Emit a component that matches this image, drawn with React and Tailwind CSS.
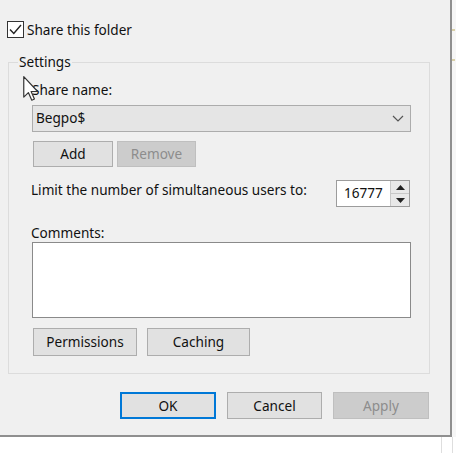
import React from "react";

const font = "font-['Noto_Sans',Arial,sans-serif]";

function Btn({ children, className = "", disabled = false }) {
  return (
    <div
      className={
        "flex items-center justify-center border text-[13.6px] leading-none " +
        (disabled
          ? "bg-[#cccccc] border-[#bfbfbf] text-[#8d8d8d] "
          : "bg-[#e1e1e1] border-[#adadad] text-[#111] ") +
        className
      }
    >
      {children}
    </div>
  );
}

export default function App() {
  return (
    <div className={"w-[456px] h-[453px] bg-white overflow-hidden relative " + font}>
      <div className="flex">
        {/* dialog */}
        <div className="w-[452px] h-[437px] bg-[#f0f0f0] border-r-2 border-b-2 border-[#8f8f8f] flex flex-col">
          {/* checkbox row */}
          <div className="flex items-center pt-[21px] pl-[7px] h-[38px]">
            <div className="w-[17px] h-[17px] border border-[#333] bg-white flex items-center justify-center">
              <svg width="13" height="11" viewBox="0 0 13 11">
                <path d="M1 5.5 L4.8 9.5 L12 1" fill="none" stroke="#222" strokeWidth="1.4" />
              </svg>
            </div>
            <span className="ml-[3px] text-[13.6px] leading-[18px] text-[#111]">Share this folder</span>
          </div>

          {/* settings group */}
          <fieldset className="ml-[8px] mr-[20px] mt-[15px] border border-[#dcdcdc] pl-[23px] pr-[18px] pb-[17px]">
            <legend className="-ml-[14px] px-[1px] text-[13.6px] leading-[18px] text-[#111]">Settings</legend>
            <div className="mt-[10px] text-[13.6px] leading-[18px] text-[#111]">Share name:</div>
            <div className="mt-[6px] h-[27px] bg-[#e5e5e5] border border-[#acacac] flex items-center justify-between pl-[3px] pr-[6px]">
              <span className="text-[13.6px] text-[#111]">Begpo$</span>
              <svg width="12" height="7" viewBox="0 0 12 7">
                <path d="M1 1 L6 6 L11 1" fill="none" stroke="#555" strokeWidth="1.2" />
              </svg>
            </div>
            <div className="mt-[9px] flex gap-[4px] ml-[1px]">
              <Btn className="w-[80px] h-[26px]">Add</Btn>
              <Btn className="w-[79px] h-[26px]" disabled>Remove</Btn>
            </div>
            <div className="mt-[13px] flex items-center justify-between h-[27px]">
              <span className="text-[13.6px] leading-[18px] text-[#111] -mt-[7px] -ml-[1px]">
                Limit the number of simultaneous users to:
              </span>
              <div className="flex h-[27px] w-[74px] border border-[#9c9c9c] bg-white mr-[1px]">
                <div className="flex-1 flex items-center pl-[7px] text-[13.6px] text-[#111]">16777</div>
                <div className="w-[19px] flex flex-col bg-[#e8e8e8] border-l border-[#c8c8c8]">
                  <div className="flex-1 flex items-center justify-center border-b border-[#c8c8c8]">
                    <svg width="9" height="5" viewBox="0 0 9 5"><path d="M0 5 L4.5 0 L9 5 Z" fill="#222" /></svg>
                  </div>
                  <div className="flex-1 flex items-center justify-center">
                    <svg width="9" height="5" viewBox="0 0 9 5"><path d="M0 0 L4.5 5 L9 0 Z" fill="#222" /></svg>
                  </div>
                </div>
              </div>
            </div>
            <div className="mt-[17px] text-[13.6px] leading-[18px] text-[#111] -ml-[1px]">Comments:</div>
            <div className="h-[76px] bg-white border border-[#8a8a8a]" />
            <div className="mt-[10px] flex gap-[10px] ml-[1px]">
              <Btn className="w-[104px] h-[28px]">Permissions</Btn>
              <Btn className="w-[103px] h-[28px]">Caching</Btn>
            </div>
          </fieldset>

          {/* bottom buttons */}
          <div className="mt-[18px] flex justify-end gap-[11px] pr-[21px]">
            <Btn className="w-[96px] h-[27px] !border-2 !border-[#0078d7]">OK</Btn>
            <Btn className="w-[95px] h-[27px]">Cancel</Btn>
            <Btn className="w-[96px] h-[27px]" disabled>Apply</Btn>
          </div>
        </div>
        {/* right strip */}
        <div className="w-[4px] h-[437px] bg-[#f6f6f6] flex flex-col">
          <div className="mt-[29px] h-[2px] w-[3px] bg-[#d8cfa8]" />
          <div className="mt-[28px] h-[2px] w-[3px] bg-[#d8cfa8]" />
        </div>
      </div>
      {/* below dialog */}
      <div className="flex h-[16px]">
        <div className="w-[441px]" />
        <div className="w-[12px] border-l border-r border-[#dedede]" />
      </div>

      {/* mouse cursor overlay */}
      <svg className="absolute left-[23px] top-[76px]" width="16" height="25" viewBox="0 0 12 19">
        <path
          d="M0.5 0.5 L0.5 16 L4 12.6 L6.6 18.4 L8.6 17.5 L6.1 11.8 L11 11.8 Z"
          fill="white"
          stroke="#333"
          strokeWidth="0.9"
          strokeLinejoin="round"
        />
      </svg>
    </div>
  );
}
